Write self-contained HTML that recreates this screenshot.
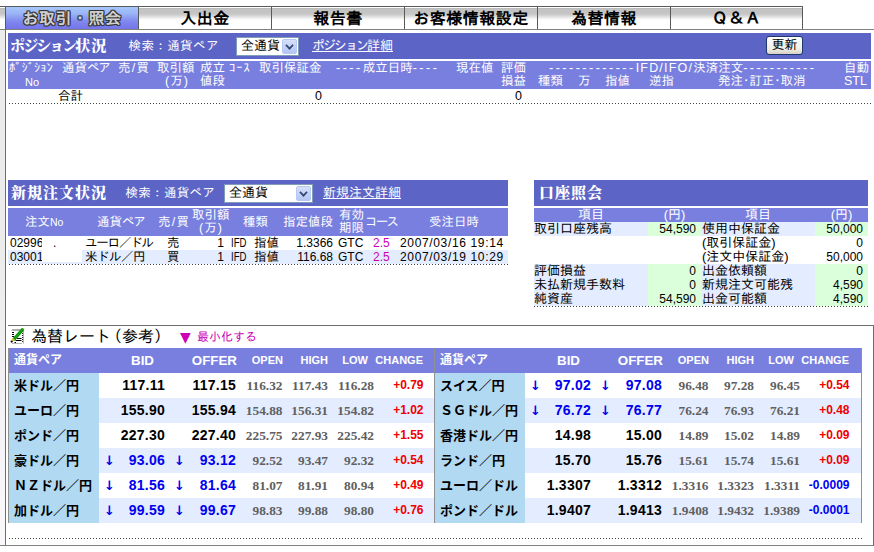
<!DOCTYPE html>
<html lang="ja">
<head>
<meta charset="utf-8">
<title>お取引・照会</title>
<style>
html,body{margin:0;padding:0;background:#fff;}
body{width:874px;height:552px;position:relative;overflow:hidden;
 font-family:"Liberation Sans","IPAGothic","Noto Sans CJK JP",sans-serif;font-size:12px;line-height:14px;color:#000;}
.abs{position:absolute;}
.t{position:absolute;white-space:nowrap;font-size:12.5px;}
.w{color:#fff;}
.r{text-align:right;}
.c{text-align:center;}
/* frame */
#strip{left:0;top:30px;width:5px;height:515px;background:linear-gradient(#ebebeb 0,#ececec 45%,#f2f0f2 65%,#faf8fa 100%);}
#strip0{left:0;top:7px;width:5px;height:22px;background:linear-gradient(#fff 0,#fff 1px,#b6b6b6 1px,#c2c2c2 2px,#c6c6c6 7px,#d8d8d8 9px,#eee 11px,#fff 13px,#fff 100%);}
.ln{position:absolute;background:#6e6e6e;}
/* tabs */
.tab{position:absolute;top:7px;height:22px;width:132px;border-left:1px solid #5a5a5a;
 background:linear-gradient(#fff 0,#fff 1px,#b6b6b6 1px,#c2c2c2 2px,#c6c6c6 7px,#d8d8d8 9px,#eee 11px,#fff 13px,#fff 100%);
 font-family:"Liberation Sans","IPAGothic",sans-serif;font-weight:bold;font-size:16px;line-height:24px;letter-spacing:.5px;text-align:center;color:#000;}
.tab.on{background:linear-gradient(#a6c8fc 0,#9ab4f6 30%,#8088ee 65%,#7474ea 100%);color:#d0d0d0;
 text-shadow:-1px 0 #333,1px 0 #333,0 -1px #333,0 1px #333,1px 1px #444,-1px -1px #444,1px -1px #444,-1px 1px #444;}
/* bars */
.bar{position:absolute;background:#5c64c6;}
.hd{position:absolute;background:#797fde;}
.ttl{position:absolute;white-space:nowrap;color:#fff;font-family:"Liberation Serif","Noto Serif CJK SC",serif;font-weight:900;font-size:15px;line-height:20px;letter-spacing:1px;}
.sel{position:absolute;background:#fff;border:1px solid #7f9db9;box-sizing:border-box;font-size:13px;line-height:16px;padding-left:4px;}
.sel i{position:absolute;right:1px;top:1px;bottom:1px;width:15px;background:linear-gradient(#d6e0fb,#b4c6f4);border:1px solid #b7c8f7;box-sizing:border-box;border-radius:2px;}
.sel i:after{content:"";position:absolute;left:3px;top:2px;width:5px;height:5px;border-right:2px solid #34456e;border-bottom:2px solid #34456e;transform:rotate(45deg) scale(.85);}
.lk{position:absolute;white-space:nowrap;color:#fff;text-decoration:underline;font-size:13px;}
.dot{position:absolute;height:1px;background:repeating-linear-gradient(90deg,#3c4a3c 0,#3c4a3c 1px,transparent 1px,transparent 3px);}
.bl{position:absolute;background:#e3edff;}
.gr{position:absolute;background:#dbffdb;}
.mg{color:#cc00b4;}
.n{font-size:12px;}
.dt{letter-spacing:.65px;}
.ifd{display:inline-block;transform:scaleX(.8);transform-origin:0 50%;font-size:12px}
.f13{font-size:13px;}
.ds{letter-spacing:2.5px;}
.sl{display:inline-block;width:6px;text-align:center;}
.nm{position:absolute;background:#b2d9f2;}
.rh{background:#797fde;}
.hb{font-weight:bold;line-height:25px;}
.a13{font-size:13.33px;}
.a11{font-size:11px;}
.rn{font-family:"Liberation Sans","Noto Sans CJK JP",sans-serif;font-weight:bold;font-size:13px;line-height:25px;}
.rv{font-weight:bold;font-size:14px;line-height:25px;letter-spacing:.25px;}
.ar{font-family:"DejaVu Sans",sans-serif;font-size:13px;line-height:26px;letter-spacing:0;}
.rs{font-family:"Liberation Serif",serif;font-weight:bold;font-size:13.33px;line-height:25px;color:#606060;}
.rc{font-weight:bold;font-size:12px;line-height:25px;}
</style>
</head>
<body>
<!-- outer frame -->
<div id="strip" class="abs"></div><div id="strip0" class="abs"></div>
<div class="ln" style="left:0;top:6px;width:803px;height:1px;background:#5a5a5a"></div>
<div class="ln" style="left:0;top:29px;width:874px;height:1px;background:#808080"></div>
<div class="ln" style="left:5px;top:6px;width:1px;height:540px;"></div>
<div class="ln" style="left:0;top:545px;width:874px;height:1px;background:#808080"></div>
<div class="ln" style="left:8px;top:325px;width:866px;height:1px;"></div>
<div class="ln" style="left:873px;top:325px;width:1px;height:221px;"></div>

<!-- tabs -->
<div class="tab on" style="left:5px;">お取引・照会</div>
<div class="tab" style="left:138px;">入出金</div>
<div class="tab" style="left:271px;">報告書</div>
<div class="tab" style="left:404px;">お客様情報設定</div>
<div class="tab" style="left:537px;">為替情報</div>
<div class="tab" style="left:670px;border-right:1px solid #5a5a5a;width:131px">Ｑ＆Ａ</div>

<!-- position panel -->
<div class="bar" style="left:8px;top:33px;width:863px;height:26px;"></div>
<div class="ttl" style="left:10px;top:36px;"><span style="letter-spacing:-1.8px">ポジション</span>状況</div>
<div class="t w" style="left:128.500px;top:39px;letter-spacing:.4px">検索：通貨ペア</div>
<div class="sel" style="left:236px;top:37px;width:63px;height:19px;">全通貨<i></i></div>
<div class="lk" style="left:312px;top:39px;"><span style="letter-spacing:-2px">ポジション</span>詳細</div>
<div class="abs" style="left:766px;top:36px;width:37px;height:19px;box-sizing:border-box;border:1px solid #1c3a6e;border-radius:3px;background:linear-gradient(#fff,#f0efe6 70%,#d6d0c4);font-size:13px;line-height:16px;text-align:center;">更新</div>
<div class="hd" style="left:8px;top:61px;width:863px;height:28px;"></div>
<div class="t w" style="left:9px;top:61px;">ﾎﾟｼﾞｼｮﾝ</div>
<div class="t w" style="left:25px;top:75px;font-size:11px">No</div>
<div class="t w" style="left:62px;top:61px;">通貨<span style="letter-spacing:-1.3px">ペア</span></div>
<div class="t w" style="left:118px;top:61px;">売<span class="sl">/</span>買</div>
<div class="t w" style="left:157px;top:61px;">取引額</div>
<div class="t w" style="left:165px;top:74px;letter-spacing:1px">(万)</div>
<div class="t w" style="left:200px;top:61px;">成立</div>
<div class="t w" style="left:200px;top:74px;">値段</div>
<div class="t w" style="left:229px;top:61px;letter-spacing:1px">ｺｰｽ</div>
<div class="t w" style="left:259px;top:61px;">取引保証金</div>
<div class="t w" style="left:336px;top:61px;"><span class="ds">----</span>成立日時<span class="ds">----</span></div>
<div class="t w" style="left:456px;top:61px;">現在値</div>
<div class="t w" style="left:501px;top:61px;">評価</div>
<div class="t w" style="left:501px;top:74px;">損益</div>
<div class="t w" style="left:549px;top:61px;"><span class="ds">-------------</span><span style="letter-spacing:1.2px">IFD/IFO/</span>決済注文<span class="ds">-----------</span></div>
<div class="t w" style="left:538px;top:74px;">種類</div>
<div class="t w" style="left:578px;top:74px;">万</div>
<div class="t w" style="left:605px;top:74px;">指値</div>
<div class="t w" style="left:649px;top:74px;">逆指</div>
<div class="t w" style="left:718px;top:74px;">発注･訂正･取消</div>
<div class="t w" style="left:844px;top:61px;">自動</div>
<div class="t w" style="left:844px;top:74px;">STL</div>
<div class="t" style="left:58px;top:89px;">合計</div>
<div class="t r" style="left:290px;width:32px;top:89px;">0</div>
<div class="t r" style="left:490px;width:32px;top:89px;">0</div>
<div class="dot" style="left:9px;top:103px;width:862px;"></div>

<!-- new order panel -->
<div class="bar" style="left:8px;top:180px;width:500px;height:26px;"></div>
<div class="ttl" style="left:11px;top:183px;">新規注文状況</div>
<div class="t w" style="left:125.500px;top:186px;letter-spacing:.3px">検索：通貨ペア</div>
<div class="sel" style="left:224px;top:184px;width:89px;height:19px;">全通貨<i></i></div>
<div class="lk" style="left:323px;top:186px;">新規注文詳細</div>
<div class="hd" style="left:8px;top:208px;width:500px;height:28px;"></div>
<div class="t w" style="left:25px;top:215px;">注文<span style="font-size:10.5px">No</span></div>
<div class="t w" style="left:97px;top:215px;">通貨<span style="letter-spacing:-1.3px">ペア</span></div>
<div class="t w" style="left:158px;top:215px;">売<span class="sl">/</span>買</div>
<div class="t w" style="left:192px;top:208px;">取引額</div>
<div class="t w" style="left:199px;top:221px;letter-spacing:1px">(万)</div>
<div class="t w" style="left:243px;top:215px;">種類</div>
<div class="t w" style="left:283px;top:215px;">指定値段</div>
<div class="t w" style="left:339px;top:208px;">有効</div>
<div class="t w" style="left:339px;top:221px;">期限</div>
<div class="t w" style="left:365px;top:215px;letter-spacing:-1.8px">コース</div>
<div class="t w" style="left:429px;top:215px;">受注日時</div>
<div class="bl" style="left:8px;top:250px;width:500px;height:14px;"></div>
<div class="t n" style="left:10px;top:236px;">02996</div>
<div class="t" style="left:85px;top:236px;letter-spacing:-1.2px">ユーロ／ドル</div>
<div class="t" style="left:167px;top:236px;">売</div>
<div class="t r n" style="left:200px;width:24px;top:236px;">1</div>
<div class="t" style="left:231px;top:236px;"><span class="ifd">IFD</span></div>
<div class="t" style="left:254px;top:236px;">指値</div>
<div class="t r n" style="left:280px;width:53px;top:236px;">1.3366</div>
<div class="t n" style="left:338px;top:236px;">GTC</div>
<div class="t mg n" style="left:373px;top:236px;">2.5</div>
<div class="t n dt" style="left:400px;top:236px;">2007/03/16 19:14</div>
<div class="t n" style="left:10px;top:250px;">03001</div>
<div class="t" style="left:85px;top:250px;letter-spacing:-.5px">米ドル／円</div>
<div class="t" style="left:167px;top:250px;">買</div>
<div class="t r n" style="left:200px;width:24px;top:250px;">1</div>
<div class="t" style="left:231px;top:250px;"><span class="ifd">IFD</span></div>
<div class="t" style="left:254px;top:250px;">指値</div>
<div class="t r n" style="left:280px;width:53px;top:250px;">116.68</div>
<div class="t n" style="left:338px;top:250px;">GTC</div>
<div class="t mg n" style="left:373px;top:250px;">2.5</div>
<div class="t n dt" style="left:400px;top:250px;">2007/03/19 10:29</div>
<div class="abs" style="left:42px;top:237px;width:40px;height:25px;background:#fff"></div>
<div class="t n" style="left:53px;top:236px;">.</div>
<div class="dot" style="left:9px;top:264px;width:499px;"></div>

<!-- account panel -->
<div class="bar" style="left:534px;top:180px;width:334px;height:26px;"></div>
<div class="ttl" style="left:539px;top:183px;">口座照会</div>
<div class="hd" style="left:534px;top:208px;width:334px;height:14px;"></div>
<div class="t f13 w c" style="left:534px;width:114px;top:208px;">項目</div>
<div class="t f13 w c" style="left:648px;width:53px;top:208px;">(円)</div>
<div class="t f13 w c" style="left:701px;width:114px;top:208px;">項目</div>
<div class="t f13 w c" style="left:815px;width:53px;top:208px;">(円)</div>
<div class="bl" style="left:534px;top:222px;width:114px;height:14px;"></div>
<div class="gr" style="left:648px;top:222px;width:53px;height:14px;"></div>
<div class="bl" style="left:701px;top:222px;width:114px;height:14px;"></div>
<div class="gr" style="left:815px;top:222px;width:53px;height:14px;"></div>
<div class="bl" style="left:534px;top:264px;width:114px;height:42px;"></div>
<div class="gr" style="left:648px;top:264px;width:53px;height:42px;"></div>
<div class="bl" style="left:701px;top:264px;width:114px;height:42px;"></div>
<div class="gr" style="left:815px;top:264px;width:53px;height:42px;"></div>
<div class="t f13" style="left:534px;top:222px;">取引口座残高</div>
<div class="t r n" style="left:648px;width:48px;top:222px;">54,590</div>
<div class="t f13" style="left:702px;top:222px;">使用中保証金</div>
<div class="t r n" style="left:815px;width:48px;top:222px;">50,000</div>
<div class="t f13" style="left:702px;top:236px;">(取引保証金)</div>
<div class="t r n" style="left:815px;width:48px;top:236px;">0</div>
<div class="t f13" style="left:702px;top:250px;">(注文中保証金)</div>
<div class="t r n" style="left:815px;width:48px;top:250px;">50,000</div>
<div class="t f13" style="left:534px;top:264px;">評価損益</div>
<div class="t r n" style="left:648px;width:48px;top:264px;">0</div>
<div class="t f13" style="left:702px;top:264px;">出金依頼額</div>
<div class="t r n" style="left:815px;width:48px;top:264px;">0</div>
<div class="t f13" style="left:534px;top:278px;">未払新規手数料</div>
<div class="t r n" style="left:648px;width:48px;top:278px;">0</div>
<div class="t f13" style="left:702px;top:278px;">新規注文可能残</div>
<div class="t r n" style="left:815px;width:48px;top:278px;">4,590</div>
<div class="t f13" style="left:534px;top:292px;">純資産</div>
<div class="t r n" style="left:648px;width:48px;top:292px;">54,590</div>
<div class="t f13" style="left:702px;top:292px;">出金可能額</div>
<div class="t r n" style="left:815px;width:48px;top:292px;">4,590</div>
<div class="dot" style="left:534px;top:306px;width:334px;"></div>

<!-- rates -->
<svg class="abs" style="left:10px;top:327px" width="16" height="18" viewBox="0 0 16 18"><rect x="2" y="3" width="10" height="13" fill="#fff"/><path d="M2 3.500l1-1 1 1 1-1 1 1 1-1 1 1 1-1 1 1" stroke="#444" fill="none"/><path d="M2 5.500h2M2 7.500h2M2 9.500h2" stroke="#000"/><path d="M7 11.500h4.500M5.500 13.500h6M4.500 15.500h1.500" stroke="#000"/><path d="M12.500 4v12" stroke="#222" stroke-dasharray="1 1"/><path d="M13.500 4v12.500" stroke="#d4bc20"/><path d="M2 16.500h10" stroke="#b8b8b8"/><path d="M12.300 2.800L4.200 12" stroke="#078f07" stroke-width="3.400" stroke-linecap="round"/><path d="M12.800 2.300L5 11" stroke="#22b822" stroke-width="1"/><path d="M4 12L2.400 13.700" stroke="#e2c222" stroke-width="2.600"/><circle cx="1.700" cy="14.600" r="1.100" fill="#000"/></svg>
<div class="t" style="left:31px;top:326px;font-size:16px;line-height:20px;font-family:'IPAGothic','Noto Sans CJK JP',sans-serif">為替レート<span style="margin-left:-5px">（</span>参考）</div>
<div class="t mg" style="left:180px;top:330px;font-size:12px"><span style="font-family:'DejaVu Sans',sans-serif;font-size:14px;line-height:14px;display:inline-block;width:17px;vertical-align:top">▼</span>最小化する</div>
<div class="hd rh" style="left:8px;top:348px;width:426px;height:25px;"></div>
<div class="nm" style="left:8px;top:373px;width:91px;height:150px;"></div>
<div class="bl" style="left:99px;top:398px;width:335px;height:25px;"></div>
<div class="bl" style="left:99px;top:448px;width:335px;height:25px;"></div>
<div class="bl" style="left:99px;top:498px;width:335px;height:25px;"></div>
<div class="t w hb" style="left:14px;top:348px;font-family:'Liberation Sans','Noto Sans CJK JP',sans-serif;font-size:12px;">通貨ペア</div>
<div class="t w hb a13 r" style="left:74px;width:80px;top:348px;">BID</div>
<div class="t w hb a13 r" style="left:157px;width:80px;top:348px;">OFFER</div>
<div class="t w hb a11 r" style="left:203px;width:80px;top:348px;">OPEN</div>
<div class="t w hb a11 r" style="left:248px;width:80px;top:348px;">HIGH</div>
<div class="t w hb a11 r" style="left:288px;width:80px;top:348px;">LOW</div>
<div class="t w hb a11 r" style="left:343px;width:80px;top:348px;">CHANGE</div>
<div class="t rn" style="left:14px;top:373px;">米ドル／円</div>
<div class="t rv r" style="left:105px;width:60px;top:373px;">117.11</div>
<div class="t rv r" style="left:176px;width:60px;top:373px;">117.15</div>
<div class="t rs r" style="left:222.5px;width:60px;top:373px;">116.32</div>
<div class="t rs r" style="left:268px;width:60px;top:373px;">117.43</div>
<div class="t rs r" style="left:314px;width:60px;top:373px;">116.28</div>
<div class="t rc r" style="left:363.5px;width:60px;top:373px;color:#f00000">+0.79</div>
<div class="t rn" style="left:14px;top:398px;">ユーロ／円</div>
<div class="t rv r" style="left:105px;width:60px;top:398px;">155.90</div>
<div class="t rv r" style="left:176px;width:60px;top:398px;">155.94</div>
<div class="t rs r" style="left:222.5px;width:60px;top:398px;">154.88</div>
<div class="t rs r" style="left:268px;width:60px;top:398px;">156.31</div>
<div class="t rs r" style="left:314px;width:60px;top:398px;">154.82</div>
<div class="t rc r" style="left:363.5px;width:60px;top:398px;color:#f00000">+1.02</div>
<div class="t rn" style="left:14px;top:423px;">ポンド／円</div>
<div class="t rv r" style="left:105px;width:60px;top:423px;">227.30</div>
<div class="t rv r" style="left:176px;width:60px;top:423px;">227.40</div>
<div class="t rs r" style="left:222.5px;width:60px;top:423px;">225.75</div>
<div class="t rs r" style="left:268px;width:60px;top:423px;">227.93</div>
<div class="t rs r" style="left:314px;width:60px;top:423px;">225.42</div>
<div class="t rc r" style="left:363.5px;width:60px;top:423px;color:#f00000">+1.55</div>
<div class="t rn" style="left:14px;top:448px;">豪ドル／円</div>
<div class="t rv ar" style="left:104px;top:448px;color:#0000f0;">↓</div>
<div class="t rv ar" style="left:174px;top:448px;color:#0000f0;">↓</div>
<div class="t rv r" style="left:105px;width:60px;top:448px;color:#0000f0;">93.06</div>
<div class="t rv r" style="left:176px;width:60px;top:448px;color:#0000f0;">93.12</div>
<div class="t rs r" style="left:222.5px;width:60px;top:448px;">92.52</div>
<div class="t rs r" style="left:268px;width:60px;top:448px;">93.47</div>
<div class="t rs r" style="left:314px;width:60px;top:448px;">92.32</div>
<div class="t rc r" style="left:363.5px;width:60px;top:448px;color:#f00000">+0.54</div>
<div class="t rn" style="left:14px;top:473px;">ＮＺドル／円</div>
<div class="t rv ar" style="left:104px;top:473px;color:#0000f0;">↓</div>
<div class="t rv ar" style="left:174px;top:473px;color:#0000f0;">↓</div>
<div class="t rv r" style="left:105px;width:60px;top:473px;color:#0000f0;">81.56</div>
<div class="t rv r" style="left:176px;width:60px;top:473px;color:#0000f0;">81.64</div>
<div class="t rs r" style="left:222.5px;width:60px;top:473px;">81.07</div>
<div class="t rs r" style="left:268px;width:60px;top:473px;">81.91</div>
<div class="t rs r" style="left:314px;width:60px;top:473px;">80.94</div>
<div class="t rc r" style="left:363.5px;width:60px;top:473px;color:#f00000">+0.49</div>
<div class="t rn" style="left:14px;top:498px;">加ドル／円</div>
<div class="t rv ar" style="left:104px;top:498px;color:#0000f0;">↓</div>
<div class="t rv ar" style="left:174px;top:498px;color:#0000f0;">↓</div>
<div class="t rv r" style="left:105px;width:60px;top:498px;color:#0000f0;">99.59</div>
<div class="t rv r" style="left:176px;width:60px;top:498px;color:#0000f0;">99.67</div>
<div class="t rs r" style="left:222.5px;width:60px;top:498px;">98.83</div>
<div class="t rs r" style="left:268px;width:60px;top:498px;">99.88</div>
<div class="t rs r" style="left:314px;width:60px;top:498px;">98.80</div>
<div class="t rc r" style="left:363.5px;width:60px;top:498px;color:#f00000">+0.76</div>
<div class="hd rh" style="left:434px;top:348px;width:427px;height:25px;"></div>
<div class="nm" style="left:434px;top:373px;width:91px;height:150px;"></div>
<div class="bl" style="left:525px;top:398px;width:336px;height:25px;"></div>
<div class="bl" style="left:525px;top:448px;width:336px;height:25px;"></div>
<div class="bl" style="left:525px;top:498px;width:336px;height:25px;"></div>
<div class="t w hb" style="left:440px;top:348px;font-family:'Liberation Sans','Noto Sans CJK JP',sans-serif;font-size:12px;">通貨ペア</div>
<div class="t w hb a13 r" style="left:500px;width:80px;top:348px;">BID</div>
<div class="t w hb a13 r" style="left:583px;width:80px;top:348px;">OFFER</div>
<div class="t w hb a11 r" style="left:629px;width:80px;top:348px;">OPEN</div>
<div class="t w hb a11 r" style="left:674px;width:80px;top:348px;">HIGH</div>
<div class="t w hb a11 r" style="left:714px;width:80px;top:348px;">LOW</div>
<div class="t w hb a11 r" style="left:769px;width:80px;top:348px;">CHANGE</div>
<div class="t rn" style="left:440px;top:373px;">スイス／円</div>
<div class="t rv ar" style="left:530px;top:373px;color:#0000f0;">↓</div>
<div class="t rv ar" style="left:600px;top:373px;color:#0000f0;">↓</div>
<div class="t rv r" style="left:531px;width:60px;top:373px;color:#0000f0;">97.02</div>
<div class="t rv r" style="left:602px;width:60px;top:373px;color:#0000f0;">97.08</div>
<div class="t rs r" style="left:648.5px;width:60px;top:373px;">96.48</div>
<div class="t rs r" style="left:694px;width:60px;top:373px;">97.28</div>
<div class="t rs r" style="left:740px;width:60px;top:373px;">96.45</div>
<div class="t rc r" style="left:789.5px;width:60px;top:373px;color:#f00000">+0.54</div>
<div class="t rn" style="left:440px;top:398px;">ＳＧドル／円</div>
<div class="t rv ar" style="left:530px;top:398px;color:#0000f0;">↓</div>
<div class="t rv ar" style="left:600px;top:398px;color:#0000f0;">↓</div>
<div class="t rv r" style="left:531px;width:60px;top:398px;color:#0000f0;">76.72</div>
<div class="t rv r" style="left:602px;width:60px;top:398px;color:#0000f0;">76.77</div>
<div class="t rs r" style="left:648.5px;width:60px;top:398px;">76.24</div>
<div class="t rs r" style="left:694px;width:60px;top:398px;">76.93</div>
<div class="t rs r" style="left:740px;width:60px;top:398px;">76.21</div>
<div class="t rc r" style="left:789.5px;width:60px;top:398px;color:#f00000">+0.48</div>
<div class="t rn" style="left:440px;top:423px;">香港ドル／円</div>
<div class="t rv r" style="left:531px;width:60px;top:423px;">14.98</div>
<div class="t rv r" style="left:602px;width:60px;top:423px;">15.00</div>
<div class="t rs r" style="left:648.5px;width:60px;top:423px;">14.89</div>
<div class="t rs r" style="left:694px;width:60px;top:423px;">15.02</div>
<div class="t rs r" style="left:740px;width:60px;top:423px;">14.89</div>
<div class="t rc r" style="left:789.5px;width:60px;top:423px;color:#f00000">+0.09</div>
<div class="t rn" style="left:440px;top:448px;">ランド／円</div>
<div class="t rv r" style="left:531px;width:60px;top:448px;">15.70</div>
<div class="t rv r" style="left:602px;width:60px;top:448px;">15.76</div>
<div class="t rs r" style="left:648.5px;width:60px;top:448px;">15.61</div>
<div class="t rs r" style="left:694px;width:60px;top:448px;">15.74</div>
<div class="t rs r" style="left:740px;width:60px;top:448px;">15.61</div>
<div class="t rc r" style="left:789.5px;width:60px;top:448px;color:#f00000">+0.09</div>
<div class="t rn" style="left:440px;top:473px;">ユーロ／ドル</div>
<div class="t rv r" style="left:531px;width:60px;top:473px;">1.3307</div>
<div class="t rv r" style="left:602px;width:60px;top:473px;">1.3312</div>
<div class="t rs r" style="left:648.5px;width:60px;top:473px;">1.3316</div>
<div class="t rs r" style="left:694px;width:60px;top:473px;">1.3323</div>
<div class="t rs r" style="left:740px;width:60px;top:473px;">1.3311</div>
<div class="t rc r" style="left:789.5px;width:60px;top:473px;color:#0000f0">-0.0009</div>
<div class="t rn" style="left:440px;top:498px;">ポンド／ドル</div>
<div class="t rv r" style="left:531px;width:60px;top:498px;">1.9407</div>
<div class="t rv r" style="left:602px;width:60px;top:498px;">1.9413</div>
<div class="t rs r" style="left:648.5px;width:60px;top:498px;">1.9408</div>
<div class="t rs r" style="left:694px;width:60px;top:498px;">1.9432</div>
<div class="t rs r" style="left:740px;width:60px;top:498px;">1.9389</div>
<div class="t rc r" style="left:789.5px;width:60px;top:498px;color:#0000f0">-0.0001</div>
<div class="ln" style="left:8px;top:348px;width:1px;height:175px;background:#909090"></div>
<div class="ln" style="left:434px;top:348px;width:1px;height:175px;background:#909090"></div>
<div class="ln" style="left:861px;top:348px;width:1px;height:175px;background:#909090"></div>
<div class="dot" style="left:9px;top:538px;width:853px;"></div>
</body>
</html>
